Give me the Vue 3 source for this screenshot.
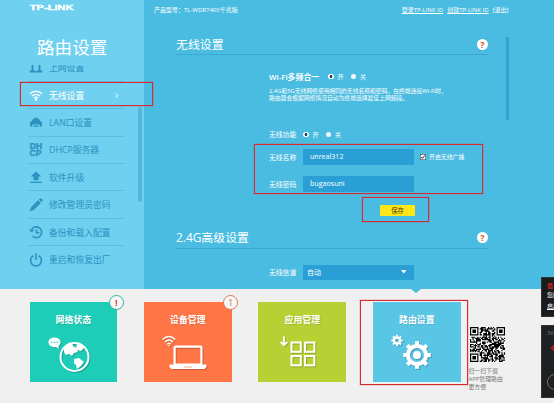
<script setup>
import { ref } from 'vue'

const menu = [
  { icon: 'wan', label: '上网设置' },
  { icon: 'wifi', label: '无线设置', active: true },
  { icon: 'lan', label: 'LAN口设置' },
  { icon: 'dhcp', label: 'DHCP服务器' },
  { icon: 'up', label: '软件升级' },
  { icon: 'pen', label: '修改管理员密码' },
  { icon: 'backup', label: '备份和载入配置' },
  { icon: 'power', label: '重启和恢复出厂' },
]

const cards = [
  { key: 'net', title: '网络状态', badge: '!' },
  { key: 'dev', title: '设备管理', badge: '1' },
  { key: 'app', title: '应用管理' },
  { key: 'route', title: '路由设置' },
]

const ssid = ref('unreal312')
const password = ref('bugaosuni')

const teeth = [0, 45, 90, 135, 180, 225, 270, 315]

// QR code modules: three finder patterns plus a seeded data field
const N = 29
function finder(x, y, ox, oy) {
  const dx = x - ox
  const dy = y - oy
  if (dx < -1 || dy < -1 || dx > 7 || dy > 7) return null
  const d = Math.max(Math.abs(dx - 3), Math.abs(dy - 3))
  return d === 3 || d <= 1
}
let seed = 7400
let qr = ''
for (let y = 0; y < N; y++) {
  for (let x = 0; x < N; x++) {
    seed = (seed * 1103515245 + 12345) % 2147483648
    const f = finder(x, y, 0, 0) ?? finder(x, y, N - 7, 0) ?? finder(x, y, 0, N - 7)
    if (f ?? (seed / 2147483648 > 0.42)) qr += `M${x} ${y}h1v1h-1z`
  }
}
</script>

<template>
  <div class="page">
    <div class="top">
      <aside class="side">
        <div class="logo">TP-LINK</div>
        <h1>路由设置</h1>
        <nav>
          <div v-for="m in menu" :key="m.icon" class="item" :class="{ active: m.active }">
            <svg class="mi" viewBox="0 0 14 14" fill="currentColor">
              <path v-if="m.icon === 'wan'" d="M2.500 2h2v7.500H7v2H.8v-2h1.700zM9.500 2h2v7.500h1.700v2H7.500v-2h2z" />
              <g v-else-if="m.icon === 'wifi'" fill="none" stroke="currentColor" stroke-width="1.300">
                <path d="M1 5.800Q7 .6 13 5.800M3 8Q7 4.600 11 8M4.900 10.100Q7 8.300 9.100 10.100" />
                <circle cx="7" cy="11.600" r=".6" fill="currentColor" />
              </g>
              <path v-else-if="m.icon === 'lan'" d="M1 11.500V7.500L4 4.300Q7 .8 10 4.300L13 7.500v4h-2.200V9.500H3.200v2zM4.300 10.500h5.400v1.300H4.300z" />
              <g v-else-if="m.icon === 'dhcp'" class="dh">
                <text x="0.800" y="6.300" textLength="12.400" lengthAdjust="spacingAndGlyphs">DH</text>
                <text x="0.500" y="13" textLength="12" lengthAdjust="spacingAndGlyphs">CP</text>
              </g>
              <path v-else-if="m.icon === 'up'" d="M7 1.500L12.500 6.500H9.500V10.300H4.500V6.500H1.500zM1 11.700h12v1.200H1z" />
              <path v-else-if="m.icon === 'pen'" d="M.8 13.200L2 9.200 9 2.200 11.800 5 4.800 12zM9.800 1.500L11 .6Q12 0 13 1T13.400 3L12.500 4.200z" />
              <g v-else-if="m.icon === 'backup'" fill="none" stroke="currentColor" stroke-width="1.600">
                <path d="M2.600 4.500A5.400 5.400 0 1 1 3.500 11.200M7.500 4.500V7.800H10.300" />
                <path d="M.2 4l2 3.600L5.500 5.300z" fill="currentColor" stroke="none" />
              </g>
              <path v-else d="M4.300 2.800A5.400 5.400 0 1 0 9.700 2.800M7 .5V7" fill="none" stroke="currentColor" stroke-width="1.600" />
            </svg>
            <span>{{ m.label }}</span>
            <svg v-if="m.active" class="chev" viewBox="0 0 4 5"><path d="M.5 .7L3.200 2.500 .5 4.300" /></svg>
          </div>
        </nav>
        <div class="sbar"></div>
      </aside>

      <main>
        <header>
          <span>产品型号：TL-WDR7400千兆版</span>
          <div class="links"><a>登录TP-LINK ID</a><a>创建TP-LINK ID</a><a class="plain">[退出]</a></div>
        </header>
        <div class="body">
          <section>
            <div class="head"><h2>无线设置</h2><i class="help">?</i></div>
            <div class="row multi">
              <b>Wi-Fi多频合一</b><i class="radio on"></i><span>开</span><i class="radio"></i><span>关</span>
            </div>
            <p class="desc">2.4G和5G无线网络使用相同的无线名称和密码，在终端连接Wi-Fi时，<br />路由器会根据网络情况自动为终端选择最佳上网频段。</p>
            <div class="row func">
              <label>无线功能</label><i class="radio on"></i><span>开</span><i class="radio"></i><span>关</span>
            </div>
            <div class="row field">
              <label>无线名称</label><div class="input">{{ ssid }}</div>
              <svg class="check" viewBox="0 0 6 6"><rect width="6" height="6" fill="#fff" /><path d="M1.200 3l1.300 1.400L4.800 1.400" /></svg>
              <span class="bc">开启无线广播</span>
            </div>
            <div class="row field second">
              <label>无线密码</label><div class="input">{{ password }}</div>
            </div>
            <button>保存</button>
          </section>
          <section>
            <div class="head adv"><h2>2.4G高级设置</h2><i class="help">?</i></div>
            <div class="row field chan">
              <label>无线信道</label>
              <div class="input select">自动<svg viewBox="0 0 6 4"><path d="M0 0h5.500L2.750 3.500z" fill="#fff" /></svg></div>
            </div>
          </section>
        </div>
        <div class="mbar"></div>
      </main>
    </div>

    <footer>
      <div v-for="c in cards" :key="c.key" class="card" :class="c.key">
        <h3>{{ c.title }}</h3>
        <span v-if="c.badge" class="badge">{{ c.badge }}</span>
        <svg class="art" viewBox="0 0 60 48">
          <g v-if="c.key === 'net'">
            <ellipse cx="10.500" cy="11.300" rx="6.100" ry="4.900" fill="#fff" />
            <path d="M11 15l3.500 3 .3-4.500z" fill="#fff" />
            <g fill="#1dcdb8"><circle cx="7.700" cy="11.300" r=".8" /><circle cx="10.500" cy="11.300" r=".8" /><circle cx="13.300" cy="11.300" r=".8" /></g>
            <circle cx="30.500" cy="26" r="14" fill="none" stroke="#fff" stroke-width="2" />
            <path fill="#fff" d="M20 18Q23 12 28 12L29 15 32 17 33 13 38 14 40 17 37 20 33 19 34 21 30 22 28 25 25 23 22 24 20 21zM30 28L35 27 40 31 37 35 33 38 32 34 30 32z" />
          </g>
          <g v-else-if="c.key === 'dev'" fill="none" stroke="#fff">
            <path stroke-width="1.400" d="M-.3 8.500Q6 2.500 12.300 8.500M2 11Q6 7 10 11M4.200 13.200Q6 11.500 7.800 13.200" />
            <circle cx="6" cy="14.600" r=".8" fill="#fff" stroke="none" />
            <rect x="11.600" y="15.600" width="26.800" height="18" rx="1" stroke-width="2.200" />
            <path fill="#fff" stroke="none" d="M6.500 33.500h37v2.500l-2 2h-33l-2-2z" />
            <path stroke="#ffab8d" d="M21 36h8" />
          </g>
          <g v-else-if="c.key === 'app'" fill="none" stroke="#fff">
            <path stroke-width="1.800" d="M7 5.500V14M3.700 11L7 14.200 10.300 11" />
            <g stroke-width="2"><rect x="14.500" y="11.500" width="9.300" height="9.300" /><rect x="28" y="11.500" width="9.300" height="9.300" /><rect x="14.500" y="25" width="9.300" height="9.300" /><rect x="28" y="25" width="9.300" height="9.300" /></g>
          </g>
          <g v-else>
            <g transform="translate(5 9.500)" fill="none" stroke="#fff">
              <circle r="3.100" stroke-width="2.500" />
              <path v-for="t in teeth" :key="t" d="M0-3.500V-5.700" stroke-width="1.900" :transform="`rotate(${t})`" />
            </g>
            <g transform="translate(25 24)" fill="none" stroke="#fff">
              <circle r="9" stroke-width="4" /><circle r="4" fill="#fff" stroke="none" />
              <path v-for="t in teeth" :key="t" d="M0-10V-13.800" stroke-width="4" :transform="`rotate(${t})`" />
            </g>
          </g>
        </svg>
      </div>
      <div class="app">
        <svg class="qr" :viewBox="`0 0 ${N} ${N}`"><path :d="qr" /></svg>
        <p>扫一扫下载<br />APP管理路由<br />更方便</p>
      </div>
    </footer>

    <div class="notch"></div>
    <div class="pop p1"><b>最</b><span>您的</span><span class="u">启用</span></div>
    <div class="pop p2"><em>360</em><i></i><u></u></div>
    <div class="mark m1"></div>
    <div class="mark m2"></div>
    <div class="mark m3"></div>
    <div class="mark m4"></div>
  </div>
</template>

<style>
body { margin: 0; overflow: hidden; }
</style>

<style scoped>
* { box-sizing: border-box; }
.page { position: relative; width: 554px; height: 403px; overflow: hidden; background: #f0f0f0; color: #fff; font-family: "Open Sans", "Noto Sans CJK SC", sans-serif; font-size: 6.700px; }
i { font-style: normal; }
h1, h2, h3, p { margin: 0; font-weight: 400; }
.top { display: flex; height: 289px; }
.side { width: 144px; background: #6fd0ef; padding-left: 28px; position: relative; overflow: hidden; }
.logo { margin: 3px 0 0 2px; height: 10px; font: 700 8px/10px "Liberation Sans", sans-serif; width: 46px; letter-spacing: .1px; white-space: nowrap; -webkit-text-stroke: .4px #fff; transform: scaleX(1.36); transform-origin: 0 0; }
h1 { margin: 21.500px 0 0 9px; height: 25px; font-size: 17.600px; line-height: 25px; }
nav { margin-top: 5.500px; height: 224px; overflow: hidden; width: 97px; }
.item { height: 27.400px; display: flex; align-items: center; border-bottom: 1px solid #5dc0e2; color: #2c93c0; font-size: 8.800px; white-space: nowrap; }
.item:first-child { margin-top: -10.500px; }
.item:last-child { border: 0; }
.item.active { color: #fff; }
.mi { width: 14px; height: 14px; margin: 0 6px 0 1px; flex: none; }
.dh { font: 700 8.200px "Liberation Sans", sans-serif; stroke: currentColor; stroke-width: .3; }
.chev { width: 4px; height: 5px; margin-left: 30.500px; fill: none; stroke: #fff; stroke-width: .9; }
.sbar { position: absolute; left: 138px; top: 107px; width: 4px; height: 95px; background: #4fb7dc; border-radius: 2px; }
main { flex: 1; background: #4bbce1; position: relative; padding: 0 0 0 10px; }
header { display: flex; height: 18px; align-items: center; justify-content: space-between; padding-right: 45.500px; font-size: 6px; }
.links { display: flex; gap: 4px; }
.links a { text-decoration: underline; }
.links .plain { text-decoration: none; }
.body { padding-left: 22px; width: 334px; }
.head { height: 36.500px; display: flex; align-items: flex-start; justify-content: space-between; border-bottom: 1px solid #3ca9d2; padding: 16.500px 0 0 0; }
h2 { font-size: 11.900px; line-height: 18px; }
.help { width: 11px; height: 11px; margin-top: 4px; background: #fff; border-radius: 50%; color: #d9532d; font: 700 9px/11px "Open Sans", sans-serif; text-align: center; }
.row { display: flex; align-items: center; margin-left: 93px; height: 16px; white-space: nowrap; }
.multi { margin-top: 14px; }
.multi b { font-size: 7.900px; font-weight: 600; width: 59px; }
.radio { width: 5.500px; height: 5.500px; border-radius: 50%; background: #f4f8fa; margin-right: 4px; }
.radio.on { background: radial-gradient(circle, #245 0 30%, #fff 45%); }
.row > span { margin-right: 7px; font-size: 6px; }
.desc { margin: 3px 0 0 93px; font-size: 5.800px; line-height: 7.700px; white-space: nowrap; }
.func { margin-top: 23.500px; }
.row label { width: 34px; font-size: 6.800px; }
.input { width: 111px; height: 15.500px; background: #299fd5; padding-left: 7px; font-size: 7.100px; line-height: 15px; margin-right: 9px; }
.func + .field { margin-top: 6.500px; }
.check { width: 6px; height: 6px; margin-left: -3px; fill: none; stroke: #123; stroke-width: 1; }
.row .bc { margin-left: 3px; font-size: 5.900px; }
.second { margin-top: 11px; }
button { display: block; border: 0; border-radius: 1px; background: #ffe616; color: #443c12; width: 35px; height: 11px; margin: 13px 0 0 204px; padding: 0; font: 6.300px/11px "Noto Sans CJK SC", sans-serif; }
.adv { height: 33.500px; padding-top: 12.500px; }
.chan { margin-top: 15px; }
.select { padding-left: 4px; font-size: 7px; display: flex; align-items: center; justify-content: space-between; padding-right: 7px; }
.select svg { width: 6px; height: 4px; }
.mbar { position: absolute; left: 361.500px; top: 37px; width: 3px; height: 83px; background: #34a4d2; }
footer { display: flex; padding: 12.500px 0 0 29.500px; gap: 26.800px; height: 114px; }
.card { width: 87.700px; height: 80.500px; position: relative; flex: none; }
.net { background: #1dcdb8; }
.dev { background: #ff7546; }
.app { flex: none; }
.card.app { background: #b7d135; }
.route { background: #59c6e6; }
h3 { text-align: center; font-size: 8.900px; font-weight: 700; line-height: 13px; padding-top: 11.500px; text-shadow: 1px 1px 1px #0002; }
.art { display: block; width: 60px; height: 48px; margin: 4.500px 0 0 14px; overflow: visible; filter: drop-shadow(1.500px 1.500px .5px #0003); }
.dev .art, .app .art, .route .art { margin-left: 19px; }
.badge { position: absolute; right: -6.500px; top: -6.500px; width: 15px; height: 15px; border: 1px solid #32b29f; border-radius: 50%; background: #f7f7f7; font-size: 9px; line-height: 13px; text-align: center; color: #e0443c; font-weight: 700; }
.dev .badge { border-color: #dc7850; color: #b97556; font-weight: 400; }
footer > .app:last-child { margin: 25px 0 0 -18px; }
.qr { display: block; width: 35px; height: 35px; margin-left: .5px; background: #fff; }
.app p { margin-top: 5px; font-size: 5.900px; line-height: 8px; color: #777; white-space: nowrap; margin-left: -1px; }
.notch { position: absolute; left: 411px; top: 289px; border: 5px solid transparent; border-top: 4.500px solid #4bbce1; border-bottom: 0; }
.pop { position: absolute; left: 541px; width: 20px; background: #1b1b1d; overflow: hidden; font-size: 6px; white-space: nowrap; border: 1px solid #333; }
.p1 { top: 277px; height: 40px; padding: 4px 0 0 5px; display: grid; grid-template-rows: 9px 11px 9px; line-height: 9px; }
.p1 b { color: #c92525; }
.u { text-decoration: underline; }
.p2 { top: 325px; height: 73px; background: #1e2123; padding: 3px 0 0 5px; }
.p2 em { font-style: normal; color: #777; display: block; }
.p2 i { display: block; width: 8px; height: 8px; margin: 7px 0 0 5px; background: #9f2021; transform: rotate(45deg); }
.p2 u { display: block; width: 20px; height: 16px; border: 1px solid #77705a; border-radius: 8px; margin-top: 22px; }
.mark { position: absolute; border: 1.500px solid #d62b30; box-shadow: 0 0 0 .3px #d62b3088; }
.m1 { left: 20px; top: 82px; width: 133px; height: 24px; }
.m2 { left: 254px; top: 144px; width: 229px; height: 50px; }
.m3 { left: 362px; top: 197px; width: 67px; height: 25px; }
.m4 { left: 360px; top: 300px; width: 108px; height: 85px; }
</style>
